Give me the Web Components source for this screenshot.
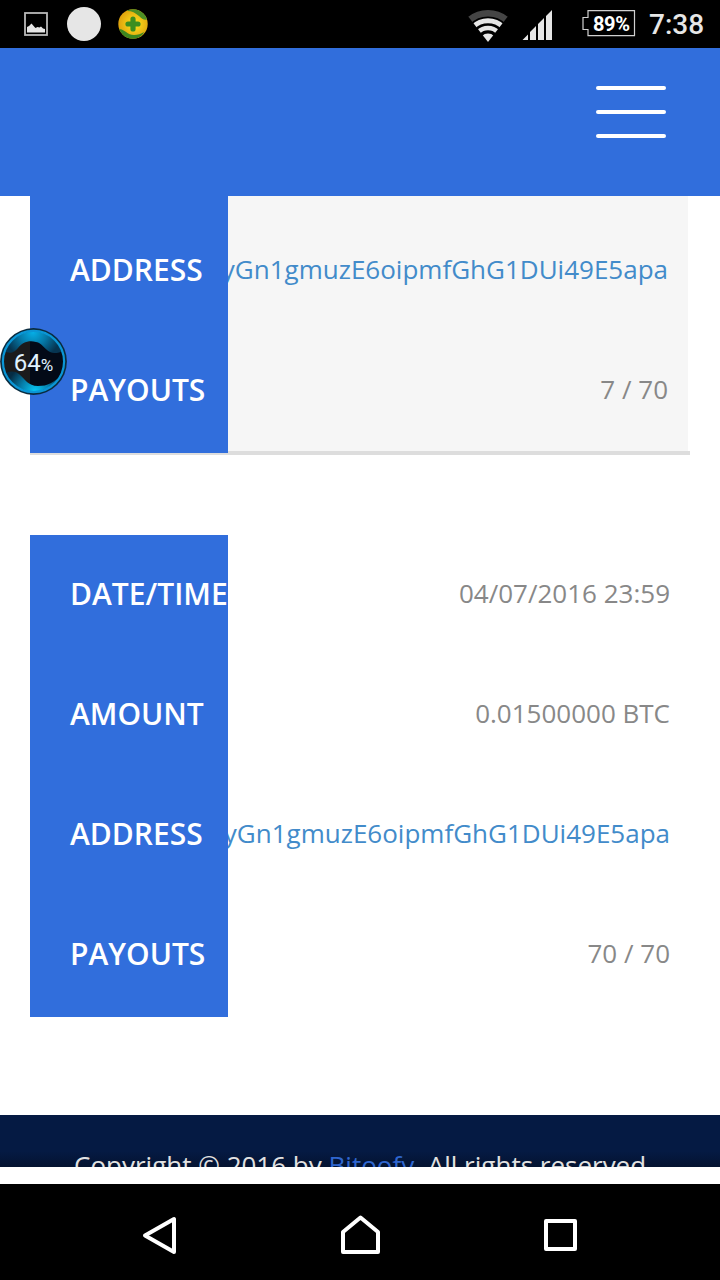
<!DOCTYPE html>
<html lang="en">
<head>
<meta charset="utf-8">
<meta name="viewport" content="width=device-width, initial-scale=1">
<title>Payouts</title>
<style>
  body {
    margin: 0;
    background: #fff;
    font-family: "Open Sans", sans-serif;
  }
</style>
</head>
<body>
<phone-screen>
  <status-bar slot="status" battery="89%" time="7:38"></status-bar>
  <site-header></site-header>
  <payout-list>
    <payout-card class="shaded">
      <payout-row label="ADDRESS" link>yGn1gmuzE6oipmfGhG1DUi49E5apa</payout-row>
      <payout-row label="PAYOUTS">7 / 70</payout-row>
    </payout-card>
    <payout-card>
      <payout-row label="DATE/TIME">04/07/2016 23:59</payout-row>
      <payout-row label="AMOUNT">0.01500000 BTC</payout-row>
      <payout-row label="ADDRESS" link>yGn1gmuzE6oipmfGhG1DUi49E5apa</payout-row>
      <payout-row label="PAYOUTS">70 / 70</payout-row>
    </payout-card>
  </payout-list>
  <site-footer></site-footer>
  <nav-bar slot="nav"></nav-bar>
  <memory-bubble slot="overlay" value="64"></memory-bubble>
</phone-screen>

<script>
function createTemplate(html) {
  const template = document.createElement('template');
  template.innerHTML = html;
  return template;
}

class BaseElement extends HTMLElement {
  constructor() {
    super();
    this.shadow = this.attachShadow({ mode: 'open' });
    this.shadow.appendChild(this.constructor.template.content.cloneNode(true));
  }
}

class PhoneScreen extends BaseElement {
  static template = createTemplate(`
    <style>
    :host {
      position: relative;
      display: flex;
      flex-direction: column;
      width: 720px;
      height: 1280px;
      overflow: hidden;
    }
    main {
      flex: 1;
      min-height: 0;
      display: flex;
      flex-direction: column;
    }
    </style>
    <slot name="status"></slot>
    <main><slot></slot></main>
    <slot name="nav"></slot>
    <slot name="overlay"></slot>
  `);
}

class StatusBar extends BaseElement {
  static template = createTemplate(`
    <style>
    :host {
      display: flex;
      align-items: center;
      justify-content: space-between;
      height: 48px;
      box-sizing: border-box;
      padding: 0 16px 0 24px;
      background: #000;
      color: #e6e6e6;
      font-family: Roboto, sans-serif;
    }
    svg { display: block; }
    .group { display: flex; align-items: center; }
    .circle {
      width: 34px;
      height: 34px;
      margin: 0 17px 0 19px;
      border-radius: 50%;
      background: #e6e6e6;
    }
    .signal { margin: 0 29px 0 14px; }
    .battery {
      display: grid;
      align-items: center;
      width: 54px;
      height: 28px;
    }
    .battery > * { grid-area: 1 / 1; }
    .battery span {
      padding-left: 11px;
      font-size: 20px;
      font-weight: 700;
      line-height: 28px;
      letter-spacing: -0.4px;
      color: #fff;
    }
    .time {
      margin-left: 13px;
      font-size: 28px;
      font-weight: 500;
      line-height: 48px;
      padding-top: 2px;
      width: 55px;
      white-space: nowrap;
    }
    </style>
    <div class="group">
      <svg width="24" height="24" viewBox="0 0 24 24">
        <rect x="1" y="1" width="22" height="22" fill="none" stroke="#b9b9b9" stroke-width="1.800"/>
        <path d="M3 20.500v-5.500l2-1 2.500-2.500 3 3.500 1 1 2-1 2 .5 1.500-1 2 2 2 .5v3.500z" fill="#e6e6e6"/>
      </svg>
      <div class="circle"></div>
      <svg width="30" height="30" viewBox="0 0 30 30">
        <defs>
          <radialGradient id="gold" cx=".55" cy=".5" r=".55">
            <stop offset="0" stop-color="#ffe51d"/>
            <stop offset="1" stop-color="#dda00c"/>
          </radialGradient>
          <clipPath id="ball"><circle cx="15" cy="15" r="14.700"/></clipPath>
        </defs>
        <g clip-path="url(#ball)">
          <rect width="30" height="30" fill="url(#gold)"/>
          <path d="M8 2C13-1 25-2 30 10c-3 2-6 0-9-3-4-3.500-8-5.500-13-5z" fill="#4c8f25"/>
          <path d="M0 20c6-1 9 6 16 6 4 0 7-1 10-3-4 9-20 11-26-3z" fill="#3d8720"/>
          <path d="M15 10v10M10 15h10" stroke="#3c8e20" stroke-width="5.200" stroke-linecap="round"/>
        </g>
      </svg>
    </div>
    <div class="group">
      <svg width="40" height="36" viewBox="0 0 40 36">
        <defs>
          <clipPath id="fan"><path d="M20 36L-.5 9.500V0H40.500V9.500z"/></clipPath>
        </defs>
        <g clip-path="url(#fan)" fill="none" stroke="#e6e6e6">
          <circle cx="20" cy="36" r="28.700" stroke="#454545" stroke-width="6.600"/>
          <circle cx="20" cy="36" r="21.200" stroke-width="5"/>
          <circle cx="20" cy="36" r="14" stroke-width="4.600"/>
          <circle cx="20" cy="36" r="8.500" fill="#e6e6e6" stroke="none"/>
        </g>
      </svg>
      <svg class="signal" width="31" height="32" viewBox="0 0 31 32">
        <path d="M.5 32L6 26.500V32zM8 32v-8l6-6V32zM16 32V16l6-6V32zM24 32V8l6-6V32z" fill="#e6e6e6"/>
      </svg>
      <div class="battery">
        <svg width="54" height="28" viewBox="0 0 54 28">
          <path d="M6 .7H52.500V25.700H6V19.500H1V7.500H6z" fill="none" stroke="#d0d0d0" stroke-width="1.200"/>
        </svg>
        <span></span>
      </div>
      <div class="time"></div>
    </div>
  `);

  connectedCallback() {
    this.shadow.querySelector('.battery span').textContent = this.getAttribute('battery');
    this.shadow.querySelector('.time').textContent = this.getAttribute('time');
  }
}

class SiteHeader extends BaseElement {
  static template = createTemplate(`
    <style>
    :host {
      display: flex;
      flex: none;
      justify-content: flex-end;
      height: 148px;
      box-sizing: border-box;
      padding: 38px 54px 0 0;
      background: #316edc;
    }
    button {
      display: flex;
      flex-direction: column;
      gap: 20px;
      width: 70px;
      height: 52px;
      padding: 0;
      border: 0;
      background: none;
    }
    i {
      width: 100%;
      height: 4px;
      border-radius: 2px;
      background: #fff;
    }
    </style>
    <button aria-label="Menu"><i></i><i></i><i></i></button>
  `);
}

class PayoutList extends BaseElement {
  static template = createTemplate(`
    <style>
    :host {
      display: flex;
      flex: none;
      flex-direction: column;
      gap: 80px;
      height: 919px;
      box-sizing: border-box;
      padding: 0 30px;
    }
    </style>
    <slot></slot>
  `);
}

class PayoutCard extends BaseElement {
  static template = createTemplate(`
    <style>
    :host {
      display: block;
      width: 660px;
    }
    .rows {
      background: linear-gradient(#316edc, #316edc) 0 0 / 198px 100% no-repeat;
      padding-bottom: 2px;
    }
    /* the first card is scrolled under the header, its bottom line runs half below the labels */
    :host(.shaded) .rows {
      padding: 15px 2px 2px 0;
      background:
        linear-gradient(#316edc, #316edc) 0 0 / 198px 100% no-repeat,
        linear-gradient(#ddd, #ddd) 0 100% / 100% 2px no-repeat,
        linear-gradient(#f6f6f6, #f6f6f6) 0 0 / 658px 100% no-repeat;
    }
    :host(.shaded) .line {
      height: 2px;
      background: #ddd;
    }
    </style>
    <div class="rows"><slot></slot></div>
    <div class="line"></div>
  `);
}

class PayoutRow extends BaseElement {
  static template = createTemplate(`
    <style>
    :host {
      display: flex;
      height: 120px;
      line-height: 118px;
      white-space: nowrap;
    }
    .label {
      flex: none;
      width: 198px;
      box-sizing: border-box;
      padding-left: 40px;
      font-size: 30px;
      font-weight: 600;
      color: #fff;
    }
    .value {
      flex: 1;
      min-width: 0;
      display: flex;
      justify-content: flex-end;
      overflow: hidden;
      padding-right: 20px;
      font-size: 26px;
      line-height: 116px;
      color: #888;
    }
    :host([link]) .value { color: #428bca; }
    </style>
    <div class="label"></div>
    <div class="value"><span><slot></slot></span></div>
  `);

  connectedCallback() {
    this.shadow.querySelector('.label').textContent = this.getAttribute('label');
  }
}

class SiteFooter extends BaseElement {
  static template = createTemplate(`
    <style>
    :host {
      display: block;
      flex: none;
      height: 52px;
      box-sizing: border-box;
      padding: 32px 0 0 7px;
      overflow: hidden;
      background: linear-gradient(#051a43 70%, #041330);
      text-align: center;
      font-size: 26px;
      line-height: 37px;
      white-space: nowrap;
      color: #e2e2e2;
    }
    a { color: #2f66cf; }
    </style>
    Copyright © 2016 by <a>Bitoofy</a>. All rights reserved.
  `);
}

class NavBar extends BaseElement {
  static template = createTemplate(`
    <style>
    :host {
      display: grid;
      grid-template-columns: repeat(3, 200px);
      justify-content: center;
      justify-items: center;
      align-items: center;
      height: 96px;
      background: #000;
    }
    svg {
      display: block;
      fill: none;
      stroke: #fff;
      stroke-width: 4;
      stroke-linejoin: round;
    }
    </style>
    <svg width="40" height="44" viewBox="0 0 40 44"><path d="M34 9V42L5 25.500z"/></svg>
    <svg width="40" height="44" viewBox="0 0 40 44"><path d="M20.500 7.500L38 22V42H3V22z"/></svg>
    <svg width="40" height="44" viewBox="0 0 40 44"><path d="M6 11H35V39H6z"/></svg>
  `);
}

class MemoryBubble extends BaseElement {
  static template = createTemplate(`
    <style>
    :host {
      position: absolute;
      left: 0;
      top: 328px;
      display: grid;
      width: 67px;
      height: 67px;
      font-family: Roboto, sans-serif;
      color: #e0f2ff;
    }
    svg, div { grid-area: 1 / 1; }
    div {
      align-self: center;
      text-align: center;
      font-size: 24px;
      line-height: 28px;
      padding-top: 4px;
    }
    small { font-size: 17px; }
    </style>
    <svg width="67" height="67" viewBox="0 0 67 67">
      <defs>
        <radialGradient id="top" gradientUnits="userSpaceOnUse" cx="33" cy="4" r="28">
          <stop offset="0" stop-color="#05b0e8"/>
          <stop offset=".5" stop-color="#0579a8"/>
          <stop offset="1" stop-color="#063450"/>
        </radialGradient>
        <radialGradient id="bottom" gradientUnits="userSpaceOnUse" cx="35" cy="63" r="28">
          <stop offset="0" stop-color="#08c8f4"/>
          <stop offset=".5" stop-color="#0680ac"/>
          <stop offset="1" stop-color="#052c44"/>
        </radialGradient>
        <clipPath id="glass"><circle cx="33.500" cy="33.500" r="30"/></clipPath>
      </defs>
      <circle cx="33.500" cy="33.500" r="33.400" fill="#0a2c40"/>
      <g clip-path="url(#glass)">
        <rect width="67" height="67" fill="#030a17"/>
        <rect width="30" height="67" fill="#1b1b1c"/>
        <path d="M0 0H67V20C61 25 54 26 50 24 44 21 42 15 36 14 28 12 22 15 18 20 14 25 10 26 4 23z" fill="url(#top)"/>
        <path d="M0 67V48C7 43 14 42 19 46 25 51 28 58 38 58 48 58 53 55 64 45V67z" fill="url(#bottom)"/>
      </g>
      <circle cx="33.500" cy="33.500" r="30.600" fill="none" stroke="#0a96d6" stroke-width="2.200"/>
    </svg>
    <div><span></span><small>%</small></div>
  `);

  connectedCallback() {
    this.shadow.querySelector('span').textContent = this.getAttribute('value');
  }
}

window.customElements.define('phone-screen', PhoneScreen);
window.customElements.define('status-bar', StatusBar);
window.customElements.define('site-header', SiteHeader);
window.customElements.define('payout-list', PayoutList);
window.customElements.define('payout-card', PayoutCard);
window.customElements.define('payout-row', PayoutRow);
window.customElements.define('site-footer', SiteFooter);
window.customElements.define('nav-bar', NavBar);
window.customElements.define('memory-bubble', MemoryBubble);
</script>
</body>
</html>
